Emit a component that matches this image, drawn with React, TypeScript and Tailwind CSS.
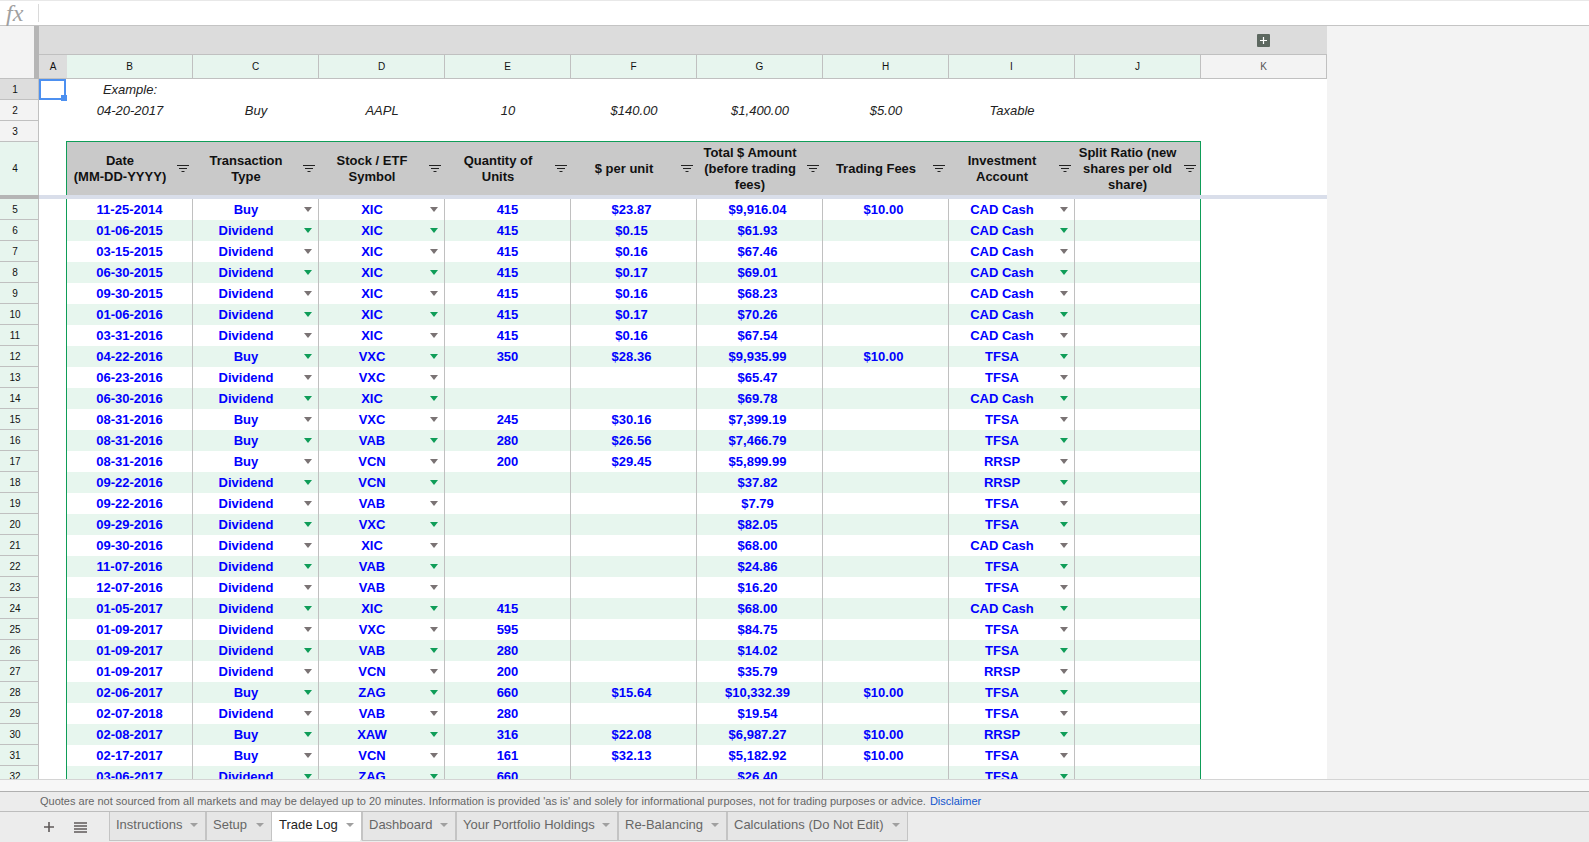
import React from 'react';

const LETTERS = ['B', 'C', 'D', 'E', 'F', 'G', 'H', 'I', 'J'];

const HEADERS: string[][] = [
  ['Date', '(MM-DD-YYYY)'],
  ['Transaction', 'Type'],
  ['Stock / ETF', 'Symbol'],
  ['Quantity of', 'Units'],
  ['$ per unit'],
  ['Total $ Amount', '(before trading', 'fees)'],
  ['Trading Fees'],
  ['Investment', 'Account'],
  ['Split Ratio (new', 'shares per old', 'share)'],
];

const EXAMPLE = ['04-20-2017', 'Buy', 'AAPL', '10', '$140.00', '$1,400.00', '$5.00', 'Taxable', ''];

const DIV = 'Dividend';
const CAD = 'CAD Cash';

const rows: string[][] = [
  ['11-25-2014', 'Buy', 'XIC', '415', '$23.87', '$9,916.04', '$10.00', CAD],
  ['01-06-2015', DIV, 'XIC', '415', '$0.15', '$61.93', '', CAD],
  ['03-15-2015', DIV, 'XIC', '415', '$0.16', '$67.46', '', CAD],
  ['06-30-2015', DIV, 'XIC', '415', '$0.17', '$69.01', '', CAD],
  ['09-30-2015', DIV, 'XIC', '415', '$0.16', '$68.23', '', CAD],
  ['01-06-2016', DIV, 'XIC', '415', '$0.17', '$70.26', '', CAD],
  ['03-31-2016', DIV, 'XIC', '415', '$0.16', '$67.54', '', CAD],
  ['04-22-2016', 'Buy', 'VXC', '350', '$28.36', '$9,935.99', '$10.00', 'TFSA'],
  ['06-23-2016', DIV, 'VXC', '', '', '$65.47', '', 'TFSA'],
  ['06-30-2016', DIV, 'XIC', '', '', '$69.78', '', CAD],
  ['08-31-2016', 'Buy', 'VXC', '245', '$30.16', '$7,399.19', '', 'TFSA'],
  ['08-31-2016', 'Buy', 'VAB', '280', '$26.56', '$7,466.79', '', 'TFSA'],
  ['08-31-2016', 'Buy', 'VCN', '200', '$29.45', '$5,899.99', '', 'RRSP'],
  ['09-22-2016', DIV, 'VCN', '', '', '$37.82', '', 'RRSP'],
  ['09-22-2016', DIV, 'VAB', '', '', '$7.79', '', 'TFSA'],
  ['09-29-2016', DIV, 'VXC', '', '', '$82.05', '', 'TFSA'],
  ['09-30-2016', DIV, 'XIC', '', '', '$68.00', '', CAD],
  ['11-07-2016', DIV, 'VAB', '', '', '$24.86', '', 'TFSA'],
  ['12-07-2016', DIV, 'VAB', '', '', '$16.20', '', 'TFSA'],
  ['01-05-2017', DIV, 'XIC', '415', '', '$68.00', '', CAD],
  ['01-09-2017', DIV, 'VXC', '595', '', '$84.75', '', 'TFSA'],
  ['01-09-2017', DIV, 'VAB', '280', '', '$14.02', '', 'TFSA'],
  ['01-09-2017', DIV, 'VCN', '200', '', '$35.79', '', 'RRSP'],
  ['02-06-2017', 'Buy', 'ZAG', '660', '$15.64', '$10,332.39', '$10.00', 'TFSA'],
  ['02-07-2018', DIV, 'VAB', '280', '', '$19.54', '', 'TFSA'],
  ['02-08-2017', 'Buy', 'XAW', '316', '$22.08', '$6,987.27', '$10.00', 'RRSP'],
  ['02-17-2017', 'Buy', 'VCN', '161', '$32.13', '$5,182.92', '$10.00', 'TFSA'],
  ['03-06-2017', DIV, 'ZAG', '660', '', '$26.40', '', 'TFSA'],
];

const TABS = [
  { name: 'Instructions', w: 'w-[97px]' },
  { name: 'Setup', w: 'w-[66px]' },
  { name: 'Trade Log', w: 'w-[90px]', active: true },
  { name: 'Dashboard', w: 'w-[94px]' },
  { name: 'Your Portfolio Holdings', w: 'w-[162px]' },
  { name: 'Re-Balancing', w: 'w-[109px]' },
  { name: 'Calculations (Do Not Edit)', w: 'w-[181px]' },
];

function FilterIcon() {
  return (
    <svg width="12" height="7" viewBox="0 0 12 7" className="ml-[4px] shrink-0" aria-hidden>
      <path d="M0 .5h12M2 3.5h8M4.5 6.5h3" stroke="#222" strokeWidth="1" fill="none" />
    </svg>
  );
}

function Arrow({ green }: { green: boolean }) {
  return (
    <svg width="8" height="5" viewBox="0 0 8 5" className="ml-[5px] shrink-0" aria-hidden>
      <path d="M0 0h8L4 5z" fill={green ? '#0f9d58' : '#7a7374'} />
    </svg>
  );
}

function RowNum({ n, selected, noBottom, top }: { n: number; selected?: boolean; noBottom?: boolean; top?: boolean }) {
  const bg = selected ? 'bg-[#dddddd]' : n < 4 ? 'bg-[#f3f3f3]' : 'bg-[#e7f5ee]';
  return (
    <div className={`flex h-full w-[39px] shrink-0 items-center justify-center border-r border-[#c0c0c0] pr-[8px] text-[10px] text-[#111] ${noBottom ? '' : 'border-b'} ${top ? 'border-t' : ''} ${bg}`}>
      {n}
    </div>
  );
}

export default function App() {
  return (
    <div className="flex h-[842px] w-[1589px] flex-col overflow-hidden bg-white font-['Liberation_Sans',sans-serif]">
      {/* Formula bar */}
      <div className="flex h-[26px] shrink-0 items-center border-t border-b border-t-[#e8e8e8] border-b-[#c4c4c4]">
        <span className="w-[39px] border-r border-[#dadada] pl-[6px] font-['Liberation_Serif',serif] text-[24px] leading-[18px] text-[#a0a0a0] italic">
          fx
        </span>
      </div>

      <div className="flex min-h-0 flex-1">
        <div className="flex w-[1327px] shrink-0 flex-col overflow-hidden">
          {/* Band above the column letters */}
          <div className="flex h-[29px] shrink-0 bg-[#dcdcdc]">
            <div className="w-[34px] bg-[#f3f3f3]" />
            <div className="w-[5px] bg-[#b5b5b5]" />
            <div className="flex flex-1 items-center justify-end border-b border-[#c0c0c0] pr-[57px]">
              <div className="flex h-[13px] w-[13px] items-center justify-center rounded-[1px] bg-[#5d6860]">
                <svg width="9" height="9" viewBox="0 0 9 9" aria-hidden>
                  <path d="M4.5 1v7M1 4.5h7" stroke="#fff" strokeWidth="1.2" />
                </svg>
              </div>
            </div>
          </div>

          {/* Column letters */}
          <div className="flex h-[24px] shrink-0 text-[10px] text-[#111]">
            <div className="w-[34px] border-b border-[#c0c0c0] bg-[#f3f3f3]" />
            <div className="w-[5px] bg-[#b5b5b5]" />
            <div className="flex w-[28px] items-center justify-center border-b border-[#c0c0c0] bg-[#dddddd]">A</div>
            {LETTERS.map((l) => (
              <div key={l} className="flex w-[126px] items-center justify-center border-r border-b border-[#c0c0c0] bg-[#e7f5ee]">
                {l}
              </div>
            ))}
            <div className="flex flex-1 items-center justify-center border-r border-b border-[#c0c0c0] bg-[#f3f3f3] text-[#555]">K</div>
          </div>

          {/* Rows 1-3 */}
          <div className="flex h-[21px] shrink-0">
            <RowNum n={1} selected />
            <div className="relative w-[27px] border-2 border-[#4d90f0]">
              <div className="absolute -right-[3px] -bottom-[3px] h-[6px] w-[6px] bg-[#4d90f0]" />
            </div>
            <div className="ml-[1px] flex w-[126px] items-center justify-center text-[13px] text-[#222] italic">Example:</div>
          </div>
          <div className="flex h-[21px] shrink-0">
            <RowNum n={2} />
            <div className="w-[28px]" />
            {EXAMPLE.map((v, i) => (
              <div key={i} className="flex w-[126px] items-center justify-center text-[13px] text-[#222] italic">
                {v}
              </div>
            ))}
          </div>
          <div className="flex h-[20px] shrink-0">
            <RowNum n={3} noBottom />
          </div>

          {/* Header row */}
          <div className="flex h-[54px] shrink-0">
            <RowNum n={4} top noBottom />
            <div className="w-[27px]" />
            <div className="flex w-[1135px] border-x border-t border-[#0f9d58] bg-[#c9c9c9]">
              {HEADERS.map((lines, i) => (
                <div key={i} className={`flex items-center pr-[4px] ${i === 8 ? 'w-[125px]' : 'w-[126px]'}`}>
                  <span className="flex-1 text-center text-[13px] leading-[16px] font-bold whitespace-nowrap text-[#111]">
                    {lines.map((t) => (
                      <span key={t} className="block">{t}</span>
                    ))}
                  </span>
                  <FilterIcon />
                </div>
              ))}
            </div>
          </div>

          {/* Freeze bar */}
          <div className="flex h-[4px] shrink-0">
            <div className="w-[39px] bg-[#b5b5b5]" />
            <div className="flex-1 bg-[#d9deea]" />
          </div>

          {/* Data */}
          <div className="min-h-0 flex-1 overflow-hidden">
            {rows.map((r, idx) => {
              const band = idx % 2 === 1;
              return (
                <div key={idx} className="flex h-[21px]">
                  <RowNum n={idx + 5} />
                  <div className="w-[27px]" />
                  <div className={`flex w-[1135px] border-x border-[#0f9d58] text-[13px] font-bold text-[#0000ff] ${band ? 'bg-[#e7f6ee]' : 'bg-white'}`}>
                    {LETTERS.map((l, c) => {
                      const dropdown = c === 1 || c === 2 || c === 7;
                      const money = c === 4 || c === 5 || c === 6;
                      const last = c === 8;
                      return (
                        <div
                          key={l}
                          className={`flex items-center ${last ? 'w-[125px]' : 'w-[126px] border-r border-[#c0c0c0]'} ${dropdown ? 'pr-[6px]' : ''} ${money ? 'pr-[4px]' : ''}`}
                        >
                          <span className="flex-1 text-center">{r[c]}</span>
                          {dropdown && <Arrow green={band} />}
                        </div>
                      );
                    })}
                  </div>
                </div>
              );
            })}
          </div>
        </div>
        <div className="flex-1 bg-[#f3f3f3]" />
      </div>

      {/* Horizontal scroll track */}
      <div className="h-[13px] shrink-0 border-t border-b border-t-[#d4d4d4] border-b-[#b0b0b0] bg-[#f7f7f7]" />

      {/* Quote notice */}
      <div className="flex h-[20px] shrink-0 items-center border-b border-[#bdbdbd] bg-[#ececec] pl-[40px] text-[11px] text-[#666]">
        Quotes are not sourced from all markets and may be delayed up to 20 minutes. Information is provided 'as is' and solely for informational purposes, not for trading purposes or advice.
        <span className="ml-[4px] text-[#1155cc]">Disclaimer</span>
      </div>

      {/* Sheet tabs */}
      <div className="flex h-[30px] shrink-0 bg-[#ececec]">
        <div className="flex w-[109px] shrink-0 items-center pl-[43px]">
          <svg width="12" height="12" viewBox="0 0 12 12" aria-hidden>
            <path d="M6 1v10M1 6h10" stroke="#5f5a5a" strokeWidth="1.6" />
          </svg>
          <svg width="13" height="11" viewBox="0 0 13 11" className="ml-[19px]" aria-hidden>
            <path d="M0 1h13M0 4h13M0 7h13M0 10h13" stroke="#5f5a5a" strokeWidth="1.4" />
          </svg>
        </div>
        {TABS.map((t) => (
          <div
            key={t.name}
            className={`flex h-[29px] items-center justify-between border-r border-[#c4c4c4] pr-[7px] pb-[3px] text-[13px] ${t.w} ${t.active ? 'rounded-b-[2px] bg-white pl-[7px] text-[#222]' : 'border-b border-l bg-[#e6e6e6] pl-[6px] text-[#666]'}`}
          >
            <span className="whitespace-nowrap">{t.name}</span>
            <svg width="8" height="4" viewBox="0 0 8 4" className="shrink-0" aria-hidden>
              <path d="M0 0h8L4 4z" fill="#a0a0a0" />
            </svg>
          </div>
        ))}
      </div>
    </div>
  );
}
